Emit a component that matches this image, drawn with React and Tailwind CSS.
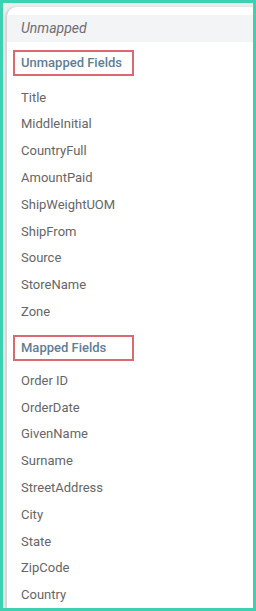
import React from "react";

const unmapped = [
  "Title",
  "MiddleInitial",
  "CountryFull",
  "AmountPaid",
  "ShipWeightUOM",
  "ShipFrom",
  "Source",
  "StoreName",
  "Zone",
];

const mapped = [
  "Order ID",
  "OrderDate",
  "GivenName",
  "Surname",
  "StreetAddress",
  "City",
  "State",
  "ZipCode",
  "Country",
];

const SectionTitle = ({ children, className }) => (
  <div
    className={`ml-[6px] w-[121px] h-[26px] border-2 border-[#da6a72] flex items-center pl-[6px] text-[13px] font-medium text-[#5f7e94] ${className}`}
  >
    {children}
  </div>
);

const FieldList = ({ items }) => (
  <ul>
    {items.map((name) => (
      <li
        key={name}
        className="h-[26.8px] flex items-center pl-[14px] text-[13px] text-[#666666]"
      >
        {name}
      </li>
    ))}
  </ul>
);

export default function App() {
  return (
    <div
      className="w-[256px] h-[611px] bg-[#3ed1b1] p-[3px] overflow-hidden"
      style={{ fontFamily: "Roboto, 'Liberation Sans', sans-serif" }}
    >
      <div className="w-full h-full bg-[#ededed] pl-[3px] pt-[4px] overflow-hidden">
        <div className="h-full bg-white rounded-tl-[10px] border-l border-[#d4d4d4] shadow-[-1px_0_2px_rgba(0,0,0,0.12)] pt-[8px] overflow-hidden">
          <div className="h-[27px] bg-[#f3f4f6] flex items-center pl-[14px] text-[14px] italic text-[#6d6d72]">
            Unmapped
          </div>

          {/* Unmapped Fields */}
          <SectionTitle className="mt-[8px]">Unmapped Fields</SectionTitle>
          <div className="mt-[8px]">
            <FieldList items={unmapped} />
          </div>

          {/* Mapped Fields */}
          <SectionTitle className="mt-[10px]">Mapped Fields</SectionTitle>
          <div className="mt-[6px]">
            <FieldList items={mapped} />
          </div>
        </div>
      </div>
    </div>
  );
}
